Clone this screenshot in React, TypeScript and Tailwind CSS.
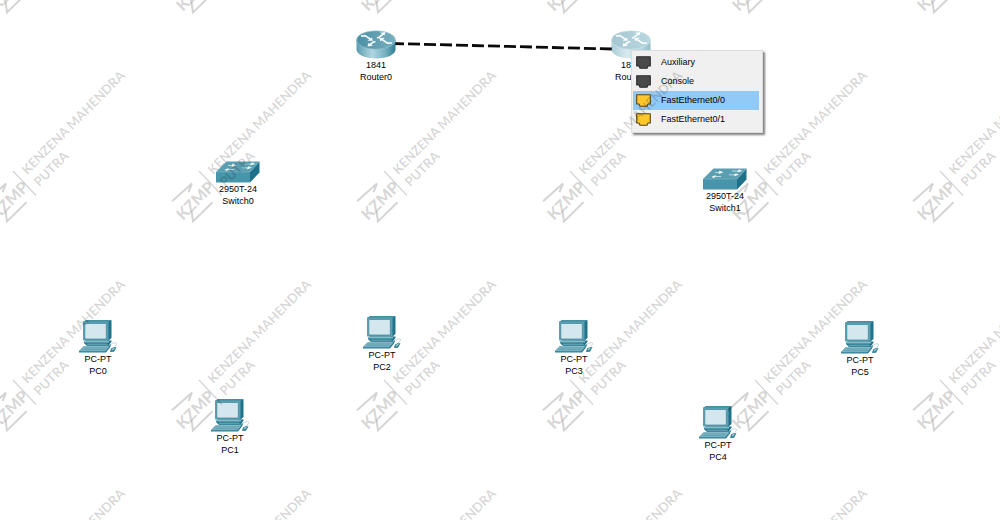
import React from "react";

type Kind = "router" | "switch" | "pc";

interface Device {
  id: string;
  kind: Kind;
  model: string;
  name: string;
  x: number;
  y: number;
  active?: boolean;
}

const devices: Device[] = [
  { id: "r0", kind: "router", model: "1841", name: "Router0", x: 376, y: 30 },
  { id: "r1", kind: "router", model: "1841", name: "Router1", x: 631, y: 30, active: true },
  { id: "s0", kind: "switch", model: "2950T-24", name: "Switch0", x: 238, y: 161 },
  { id: "s1", kind: "switch", model: "2950T-24", name: "Switch1", x: 725, y: 168 },
  { id: "p0", kind: "pc", model: "PC-PT", name: "PC0", x: 98, y: 320 },
  { id: "p1", kind: "pc", model: "PC-PT", name: "PC1", x: 230, y: 399 },
  { id: "p2", kind: "pc", model: "PC-PT", name: "PC2", x: 382, y: 316 },
  { id: "p3", kind: "pc", model: "PC-PT", name: "PC3", x: 574, y: 320 },
  { id: "p4", kind: "pc", model: "PC-PT", name: "PC4", x: 718, y: 406 },
  { id: "p5", kind: "pc", model: "PC-PT", name: "PC5", x: 860, y: 321 },
];

const ports = [
  { label: "Auxiliary", fill: "#4a4a4a", stroke: "#2c2c2c" },
  { label: "Console", fill: "#4a4a4a", stroke: "#2c2c2c" },
  { label: "FastEthernet0/0", fill: "#fcc82c", stroke: "#5a4614", selected: true },
  { label: "FastEthernet0/1", fill: "#fcc82c", stroke: "#5a4614" },
];

const markColumns = [-22, 164, 349, 535, 720, 905];

// The first row shows only the logos, the last one only the long text line.
const markRows = [
  { top: -48, logo: true, first: false, second: false },
  { top: 161, logo: true, first: true, second: true },
  { top: 370, logo: true, first: true, second: true },
  { top: 579, logo: false, first: true, second: false },
];

function RouterIcon({ id }: { id: string }) {
  return (
    <svg width="40" height="29" viewBox="0 0 40 29" aria-hidden="true">
      <defs>
        <linearGradient id={`${id}-body`} x1="0" x2="1" y1="0" y2="0">
          <stop offset="0" stopColor="#5a9bae" />
          <stop offset="0.4" stopColor="#b0d6e0" />
          <stop offset="0.75" stopColor="#74b0c0" />
          <stop offset="1" stopColor="#2f7c92" />
        </linearGradient>
        <linearGradient id={`${id}-top`} x1="0" x2="1" y1="0" y2="0">
          <stop offset="0" stopColor="#4a8fa3" />
          <stop offset="1" stopColor="#79b0c0" />
        </linearGradient>
      </defs>
      <path d="M0.500 10V19.500C0.500 24.500 9 28.500 20 28.500S39.500 24.500 39.500 19.500V10Z" fill={`url(#${id}-body)`} />
      <ellipse cx="20" cy="10" rx="19.500" ry="9.200" fill={`url(#${id}-top)`} stroke="#9cc8d4" strokeWidth="0.600" />
      <g fill="none" stroke="#f4fbfd" strokeWidth="1.700">
        <path d="M5 6L9 5.600L14.500 9.300" />
        <path d="M36 13L31.500 13.200L26 9.500" />
        <path d="M21 8L23.500 7L27.500 3.800" />
        <path d="M19.500 11.500L17 12.300L13.500 15" />
      </g>
      <g fill="#f4fbfd">
        <path d="M11.500 10.800L17 10.800L15.800 7.600Z" />
        <path d="M29 7.800L23.200 8L24.500 11.200Z" />
        <path d="M24 2.800L29.500 2L28.500 5.600Z" />
        <path d="M12.300 13L17 15.800L11.500 16.400Z" />
      </g>
    </svg>
  );
}

function SwitchIcon() {
  return (
    <svg width="44" height="22" viewBox="0 0 44 22" aria-hidden="true">
      <path d="M0 11L10.500 0.500H43.500L34 11Z" fill="#5a9fb1" />
      <path d="M34 11L43.500 0.500V11.500L34 21.500Z" fill="#1f7189" />
      <path d="M0 11H34V21.500H0Z" fill="#4795aa" />
      <path d="M0 11H34L43.500 0.500" fill="none" stroke="#7db6c5" strokeWidth="0.600" />
      <g fill="none" stroke="#c9e1e8" strokeWidth="0.900">
        <path d="M12 4.500H18" />
        <path d="M29 3H37" />
        <path d="M10 8.500H18" />
        <path d="M26 6.800H33" />
      </g>
      <g fill="#edf7fa">
        <path d="M16.500 2.600L20.500 4.500L15.500 6Z" />
        <path d="M36 1.200L39.500 3L34 4.600Z" />
        <path d="M13 6.900L8.500 8.700L11 10.300Z" />
        <path d="M32.500 5.200L36 6.800L30.500 8.600Z" />
      </g>
    </svg>
  );
}

function PcIcon() {
  return (
    <svg width="38" height="33" viewBox="0 0 38 33" aria-hidden="true">
      <path d="M4 2L7 0.300H32.500V18L29 21Z" fill="#1f7289" />
      <path d="M4 2L7 0.300H32.500L29.500 2.300Z" fill="#3d8ea3" />
      <rect x="4" y="1.500" width="25.500" height="19" rx="0.800" fill="#5a9eb0" />
      <rect x="5.800" y="3.500" width="21.500" height="15.500" rx="1" fill="#d4e6ee" stroke="#3b869a" strokeWidth="0.700" />
      <path d="M5 21.300L7 20.500H32.500V21.500L29.500 26H8L5 23Z" fill="#1f7289" />
      <path d="M4.500 21H30V22.400H5.500Z" fill="#87b9c7" />
      <path d="M7.500 23.500H28L29.500 25.500H8Z" fill="#5a9eb0" />
      <path d="M4.500 26.500H29L32.500 23.500L31 27.500L27 32.500H0V31Z" fill="#2c7e94" />
      <path d="M4.500 26.500H30.500L26 31.200H0.300Z" fill="#7ab1c0" />
      <path d="M5.500 28H27.500M4 29.600H26" fill="none" stroke="#5b9eb0" strokeWidth="0.600" />
      <path d="M32 28.500L34.500 27.300H37.500L35 31.700L31 32Z" fill="#2f7f95" />
      <path d="M32.500 29L34.500 28L36 28.300L33.500 30.500Z" fill="#a0cbd6" />
      <path d="M32.500 23.500L36.500 22.700L38 23.600L35.500 27" fill="none" stroke="#b9ced5" strokeWidth="0.800" />
    </svg>
  );
}

function DeviceIcon({ device }: { device: Device }) {
  if (device.kind === "router") return <RouterIcon id={device.id} />;
  if (device.kind === "switch") return <SwitchIcon />;
  return <PcIcon />;
}

function DeviceNode({ device }: { device: Device }) {
  return (
    <div
      className="absolute flex -translate-x-1/2 flex-col items-center text-center text-[9px] leading-3 text-black"
      style={{ left: device.x, top: device.y }}
    >
      <span className={device.active ? "opacity-50" : ""}>
        <DeviceIcon device={device} />
      </span>
      <span>{device.model}</span>
      <span>{device.name}</span>
    </div>
  );
}

function PortMenu() {
  return (
    <div
      role="menu"
      aria-label="Ports"
      className="absolute top-[50px] left-[631px] flex w-[132px] flex-col border border-[#dcdcdc] bg-[#f0f0f0] px-px pt-0.5 pb-[3px] shadow-[2px_2px_2px_rgba(0,0,0,0.5)]"
    >
      {ports.map((port) => (
        <button
          key={port.label}
          type="button"
          role="menuitem"
          className={
            port.selected
              ? "mr-0.5 flex h-[19px] items-center gap-2.5 bg-[#91c9f7] pl-[3px] text-left text-[9px] text-black"
              : "mr-0.5 flex h-[19px] items-center gap-2.5 pl-[3px] text-left text-[9px] text-black"
          }
        >
          <svg width="15" height="13" viewBox="0 0 15 13" className="shrink-0" aria-hidden="true">
            <path
              d="M0.700 0.700H14.300V10H12L11 12.200H4L3 10H0.700Z"
              fill={port.fill}
              stroke={port.stroke}
              strokeWidth="1.100"
              strokeLinejoin="round"
            />
          </svg>
          <span>{port.label}</span>
        </button>
      ))}
    </div>
  );
}

function Watermark({ left, row }: { left: number; row: (typeof markRows)[number] }) {
  return (
    <div className="absolute text-black/17" style={{ left, top: row.top }}>
      {row.logo && (
        <svg width="64" height="64" viewBox="0 0 64 64" className="absolute">
          <g fill="none" stroke="currentColor" strokeWidth="2">
            <path d="M8 40.300L28 22.500L24.500 31" />
            <path d="M48.500 41.300L29 60.500L27.500 50" />
            <path d="M35 10L58 34.500" strokeWidth="1.200" />
          </g>
          <text
            transform="translate(19 60) rotate(-45)"
            fill="currentColor"
            fontSize="16"
            fontWeight="900"
            fontFamily="Lato, sans-serif"
          >
            KZMP
          </text>
        </svg>
      )}
      <div className="absolute top-0 left-[52px] origin-left -rotate-45 font-['Lato',sans-serif] text-[13px] leading-[17px] font-bold whitespace-nowrap">
        {row.first && <p>KENZENA MAHENDRA</p>}
        {row.second ? <p>PUTRA</p> : <p className="h-[17px]" />}
      </div>
    </div>
  );
}

export default function App() {
  return (
    <main className="relative min-h-screen w-full overflow-hidden bg-white font-['Liberation_Sans',Arial,sans-serif]">
      <svg width="640" height="80" viewBox="0 0 640 80" className="absolute top-0 left-0" aria-hidden="true">
        <path d="M392 43.500L612 49" fill="none" stroke="#0a0a0a" strokeWidth="2.800" strokeDasharray="12 4" />
      </svg>
      {devices.map((device) => (
        <DeviceNode key={device.id} device={device} />
      ))}
      <PortMenu />
      <div className="pointer-events-none absolute inset-0 overflow-hidden" aria-hidden="true">
        {markRows.map((row) =>
          markColumns.map((left) => <Watermark key={`${left}:${row.top}`} left={left} row={row} />),
        )}
      </div>
    </main>
  );
}
